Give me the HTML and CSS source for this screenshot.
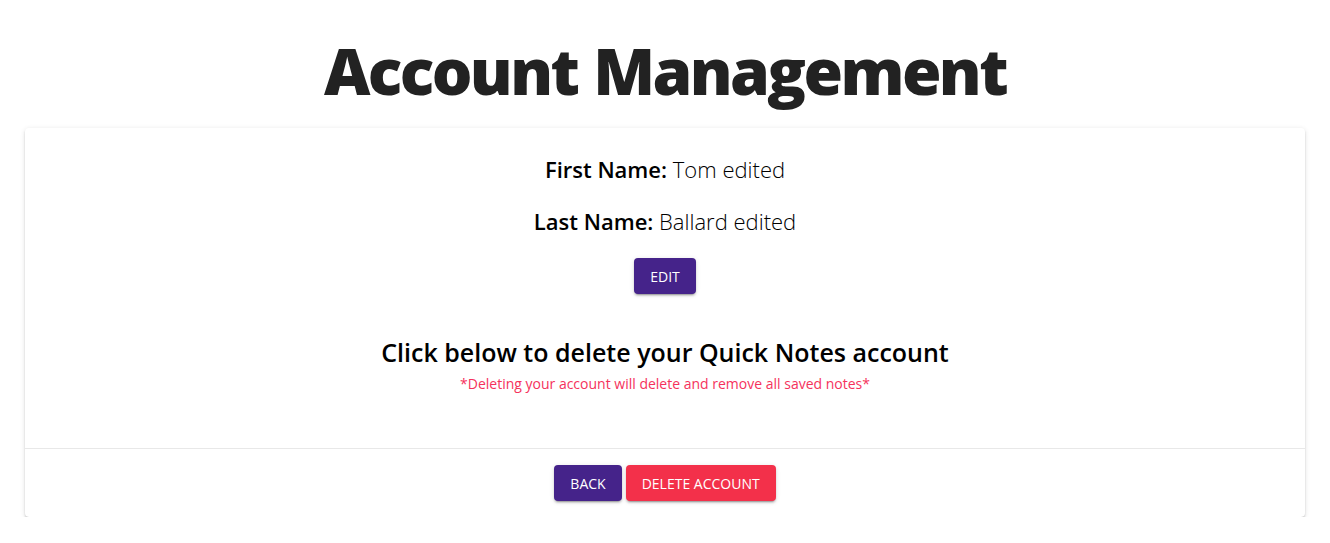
FILE: index.html
```html
<!DOCTYPE html>
<html>
<head>
<meta charset="utf-8">
<link rel="stylesheet" href="styles.css">
</head>
<body>
<h1 class="title">Account Management</h1>
<div class="card">
  <div class="card-content">
    <p class="field"><span class="label">First Name:</span> <span class="value">Tom edited</span></p>
    <p class="field"><span class="label">Last Name:</span> <span class="value">Ballard edited</span></p>
    <button class="btn btn-purple">Edit</button>
    <h2 class="delete-heading">Click below to delete your Quick Notes account</h2>
    <p class="warning">*Deleting your account will delete and remove all saved notes*</p>
  </div>
  <div class="card-actions">
    <button class="btn btn-purple">Back</button>
    <button class="btn btn-red">Delete Account</button>
  </div>
</div>
</body>
</html>
```
FILE: styles.css
```css
* { box-sizing: border-box; }
body {
  margin: 0;
  font-family: "Open Sans", "Noto Sans", sans-serif;
  background: #fff;
  color: #000;
}
.title {
  margin: 0;
  padding-top: 31px;
  height: 128px;
  text-align: center;
  font-size: 64px;
  font-weight: 800;
  color: #222;
  line-height: 80px;
  letter-spacing: -2.6px;
  word-spacing: 2px;
}
.card {
  max-width: 1280px;
  margin: 0 auto;
  background: #fff;
  border-radius: 4px;
  box-shadow: 0 3px 1px -2px rgba(0,0,0,0.2), 0 2px 2px 0 rgba(0,0,0,0.14), 0 1px 5px 0 rgba(0,0,0,0.12);
}
.card-content {
  display: flex;
  flex-direction: column;
  align-items: center;
  padding: 25px 16px 54px;
  border-bottom: 1px solid #e8e8e8;
}
.field {
  margin: 0 0 20px;
  font-size: 22px;
  line-height: 32px;
}
.label { font-weight: 600; }
.value { font-weight: 300; }
.btn {
  height: 36px;
  padding: 0 16px;
  border: none;
  border-radius: 4px;
  color: #fff;
  font-family: "Open Sans", sans-serif;
  font-size: 14px;
  text-transform: uppercase;
  cursor: pointer;
  box-shadow: 0 3px 1px -2px rgba(0,0,0,0.2), 0 2px 2px 0 rgba(0,0,0,0.14), 0 1px 5px 0 rgba(0,0,0,0.12);
}
.btn-purple { background: #45238a; }
.btn-red { background: #f3304a; }
.card-content .btn { margin-top: 1px; }
.delete-heading {
  margin: 41px 0 0;
  font-size: 25px;
  font-weight: 600;
  line-height: 34px;
}
.warning {
  margin: 5px 0 0;
  font-size: 14px;
  color: #f5325c;
  line-height: 20px;
}
.card-actions {
  display: flex;
  justify-content: center;
  gap: 4px;
  padding: 16px;
}
```
